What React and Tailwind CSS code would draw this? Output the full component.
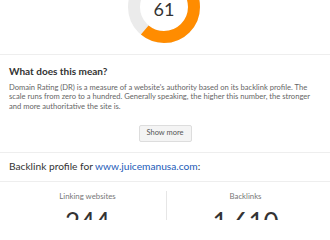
import React from "react";

function Donut({ value }) {
  const r = 30;
  const c = 2 * Math.PI * r;
  const dash = (value / 100) * c;
  return (
    <div className="relative w-[72px] h-[72px]">
      <svg width="72" height="72" viewBox="0 0 72 72">
        <circle cx="36" cy="36" r={r} fill="none" stroke="#ebebeb" strokeWidth="12" />
        <circle
          cx="36"
          cy="36"
          r={r}
          fill="none"
          stroke="#ff8c00"
          strokeWidth="12"
          strokeDasharray={`${dash} ${c}`}
          transform="rotate(-90 36 36)"
        />
      </svg>
      <div className="absolute inset-0 flex items-center justify-center text-[18px] text-[#333] leading-none pt-[3px]">
        {value}
      </div>
    </div>
  );
}

export default function App() {
  return (
    <div className="w-[330px] h-[220px] overflow-hidden bg-white font-['Lato',sans-serif] text-[#333]">
      <div className="h-[55px] border-b border-[#eeeeee] flex justify-center">
        <div className="mt-[-29px] ml-[-2px]">
          <Donut value={61} />
        </div>
      </div>
      <div className="px-[9px] pt-[9px] pb-[10px] border-b border-[#eeeeee]">
        <div className="text-[10px] font-bold leading-[14px] text-[#333]">What does this mean?</div>
        <p className="mt-[4.5px] text-[7.6px] leading-[9.7px] text-[#666]">
          Domain Rating (DR) is a measure of a website's authority based on its backlink profile. The scale runs from zero to a hundred. Generally speaking, the higher this number, the stronger and more authoritative the site is.
        </p>
        <div className="mt-[13px] flex justify-center">
          <button className="h-[17px] w-[53px] rounded-[2px] border border-[#dddddd] bg-[#f4f4f4] text-[7.5px] text-[#555] leading-none">
            Show more
          </button>
        </div>
      </div>
      <div className="h-[29px] px-[9px] flex items-center border-b border-[#eeeeee] text-[10.2px] text-[#333]">
        <span>
          Backlink profile for <span className="text-[#1c5bb8]">www.juicemanusa.com</span>:
        </span>
      </div>
      <div className="flex pt-[9px] pl-[9px] pr-[6px]">
        <div className="w-[158px] flex flex-col items-center border-r border-[#e6e6e6]">
          <div className="text-[7.8px] text-[#777] leading-[10px]">Linking websites</div>
          <div className="mt-[8px] text-[26px] leading-none text-[#333]">244</div>
        </div>
        <div className="flex-1 flex flex-col items-center">
          <div className="text-[7.8px] text-[#777] leading-[10px]">Backlinks</div>
          <div className="mt-[8px] text-[26px] leading-none text-[#333]">1,610</div>
        </div>
      </div>
    </div>
  );
}
